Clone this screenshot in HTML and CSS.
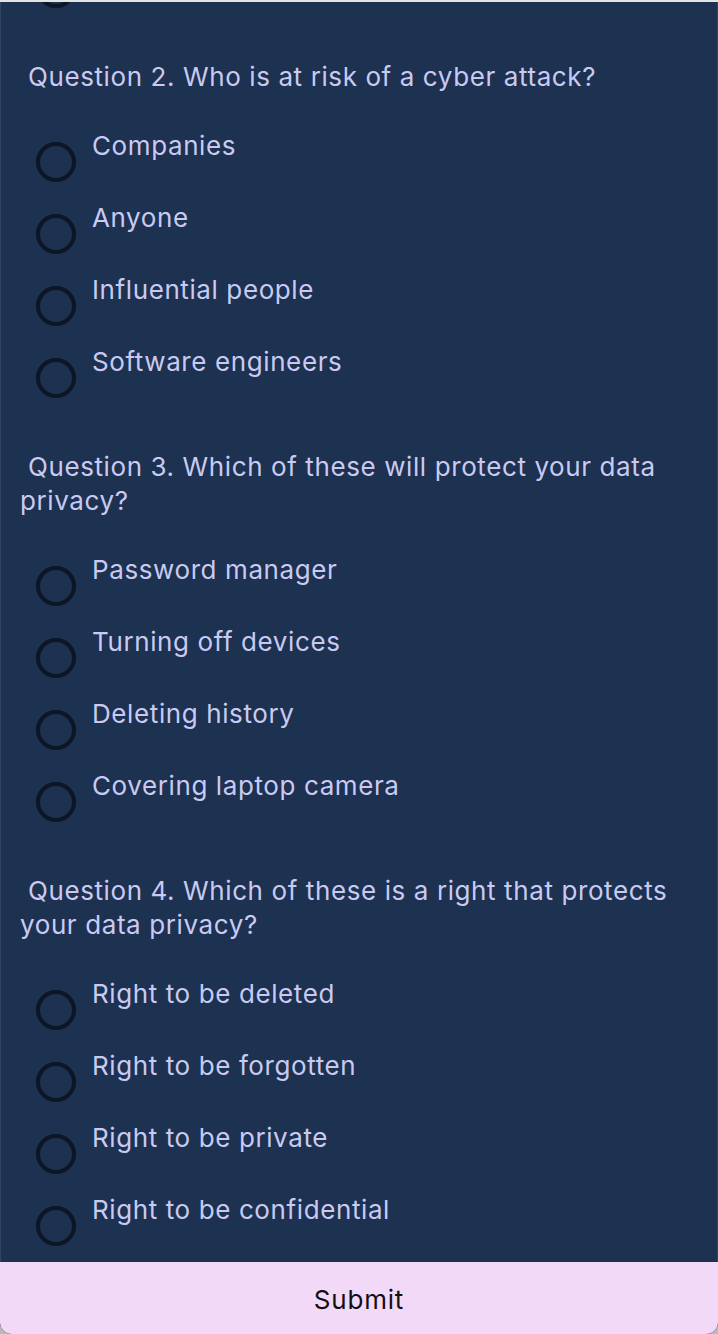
FILE: index.html
```html
<!DOCTYPE html>
<html lang="en">
<head>
    <meta charset="UTF-8">
    <meta name="viewport" content="width=device-width, initial-scale=1.0">
    <title>Data privacy quiz</title>
    <link rel="stylesheet" href="styles.css">
</head>
<body>
    <div class="window">
        <div class="topStrip"></div>

        <div class="scrollArea">
            <div class="quizList">
                <!-- last option of question 1, scrolled mostly out of view -->
                <label class="option">
                    <span class="radio"></span>
                    <span class="optionText"></span>
                </label>

                <div class="question">
                    <p class="questionText"> Question 2. Who is at risk of a cyber attack?</p>
                    <label class="option"><span class="radio"></span><span class="optionText">Companies</span></label>
                    <label class="option"><span class="radio"></span><span class="optionText">Anyone</span></label>
                    <label class="option"><span class="radio"></span><span class="optionText">Influential people</span></label>
                    <label class="option"><span class="radio"></span><span class="optionText">Software engineers</span></label>
                </div>

                <div class="question">
                    <p class="questionText"> Question 3. Which of these will protect your data privacy?</p>
                    <label class="option"><span class="radio"></span><span class="optionText">Password manager</span></label>
                    <label class="option"><span class="radio"></span><span class="optionText">Turning off devices</span></label>
                    <label class="option"><span class="radio"></span><span class="optionText">Deleting history</span></label>
                    <label class="option"><span class="radio"></span><span class="optionText">Covering laptop camera</span></label>
                </div>

                <div class="question">
                    <p class="questionText"> Question 4. Which of these is a right that protects your data privacy?</p>
                    <label class="option"><span class="radio"></span><span class="optionText">Right to be deleted</span></label>
                    <label class="option"><span class="radio"></span><span class="optionText">Right to be forgotten</span></label>
                    <label class="option"><span class="radio"></span><span class="optionText">Right to be private</span></label>
                    <label class="option"><span class="radio"></span><span class="optionText">Right to be confidential</span></label>
                </div>
            </div>
        </div>

        <button class="submitBtn">Submit</button>
    </div>
</body>
</html>
```

FILE: styles.css
```css
html, body {
    margin: 0;
    height: 100%;
}

body {
    background: #b9b9b9;
    font-family: Inter, "Noto Sans", "Liberation Sans", sans-serif;
    overflow: hidden;
}

.window {
    height: 1334px;
    display: flex;
    flex-direction: column;
    background: #1d3150;
    border-radius: 0 0 12px 12px;
    overflow: hidden;
    box-shadow: inset 1px 0 0 #34465f, inset -1px 0 0 #34465f;
}

.topStrip {
    height: 2px;
    background: #e4e4e4;
}

.scrollArea {
    flex: 1;
    overflow: hidden;
}

/* the list is scrolled a little, so the first row is cut off */
.quizList {
    margin-top: -48px;
}

.questionText {
    margin: 0;
    padding: 34px 20px;
    font-size: 26px;
    line-height: 34px;
    letter-spacing: 0.6px;
    color: #c9caf2;
    white-space: pre-wrap;
}

.option {
    display: flex;
    align-items: flex-start;
    height: 72px;
}

.radio {
    flex: none;
    width: 32px;
    height: 32px;
    margin: 14px 16px 0 36px;
    border: 4px solid #0c1627;
    border-radius: 50%;
}

.optionText {
    padding-top: 2px;
    font-size: 26px;
    line-height: 32px;
    letter-spacing: 0.6px;
    color: #c9caf2;
}

.submitBtn {
    flex: none;
    height: 72px;
    border: none;
    background: #f3d9f8;
    color: #111;
    font-family: inherit;
    font-size: 26px;
    letter-spacing: 0.8px;
    padding: 3px 0 0;
}
```
